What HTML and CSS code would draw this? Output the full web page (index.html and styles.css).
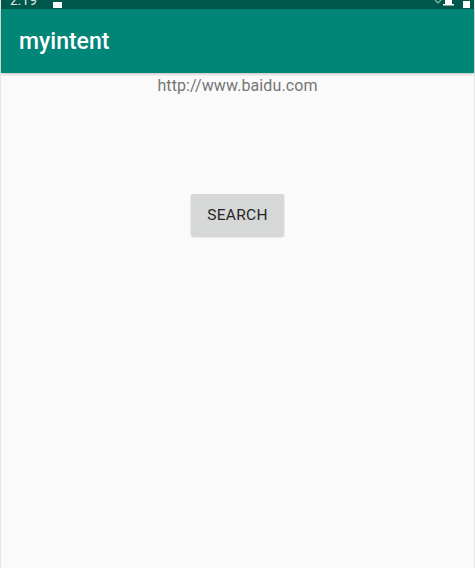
FILE: index.html
```html
<!DOCTYPE html>
<html>
<head>
<meta charset="utf-8">
<link rel="stylesheet" href="styles.css">
</head>
<body>
<div class="screen">
  <div class="statusbar">
    <span class="time">2:19</span>
    <span class="sd"></span>
    <span class="right">
      <svg class="sig" width="26" height="10" viewBox="0 0 26 10"><path d="M2 2 L5 5 L8 2" fill="none" stroke="#cfe" stroke-width="1.2" opacity="0.6"/><rect x="12" y="0" width="7" height="6" fill="#fff"/><rect x="10" y="6" width="11" height="1.5" fill="#fff"/></svg>
      <span class="bat"></span>
    </span>
  </div>
  <div class="appbar"><span class="title">myintent</span></div>
  <div class="content">
    <div class="url">http://www.baidu.com</div>
    <button class="btn">SEARCH</button>
  </div>
</div>
</body>
</html>
```
FILE: styles.css
```css
html, body { margin: 0; padding: 0; }
body { width: 475px; height: 568px; overflow: hidden; font-family: Roboto, "Noto Sans", sans-serif; background: #fafafa; }
.screen { width: 475px; height: 568px; box-sizing: border-box; border-left: 1px solid #e6e6e6; border-right: 1px solid #e6e6e6; display: flex; flex-direction: column; }
.statusbar { height: 9px; background: #00574b; position: relative; overflow: hidden; display: flex; align-items: flex-end; }
.time { color: #fff; font-size: 14px; line-height: 14px; margin-left: 9px; margin-bottom: 2px; opacity: 0.85; }
.sd { width: 9px; height: 6px; background: #fff; margin-left: 16px; margin-bottom: 1px; }
.right { margin-left: auto; margin-right: 4px; display: flex; align-items: flex-end; gap: 4px; margin-bottom: 1px; }
.sig { display: block; }
.bat { width: 7px; height: 7px; background: #fff; }
.appbar { height: 64px; background: #008577; display: flex; align-items: center; box-shadow: 0 1px 3px rgba(0,0,0,0.25); position: relative; z-index: 1; }
.title { color: #fff; font-size: 23px; font-weight: 500; margin-left: 18px; margin-top: 0; }
.content { flex: 1; display: flex; flex-direction: column; align-items: center; }
.url { color: #757575; font-size: 16px; margin-top: 2px; line-height: 22px; letter-spacing: 0.1px; }
.btn { margin-top: 97px; width: 93px; height: 42px; border: none; border-radius: 2px; background: #d6d7d7; color: #262626; font-family: Roboto, sans-serif; font-size: 15.5px; font-weight: 400; letter-spacing: 0.3px; box-shadow: 0 1px 2px rgba(0,0,0,0.2); padding: 0; }
```
